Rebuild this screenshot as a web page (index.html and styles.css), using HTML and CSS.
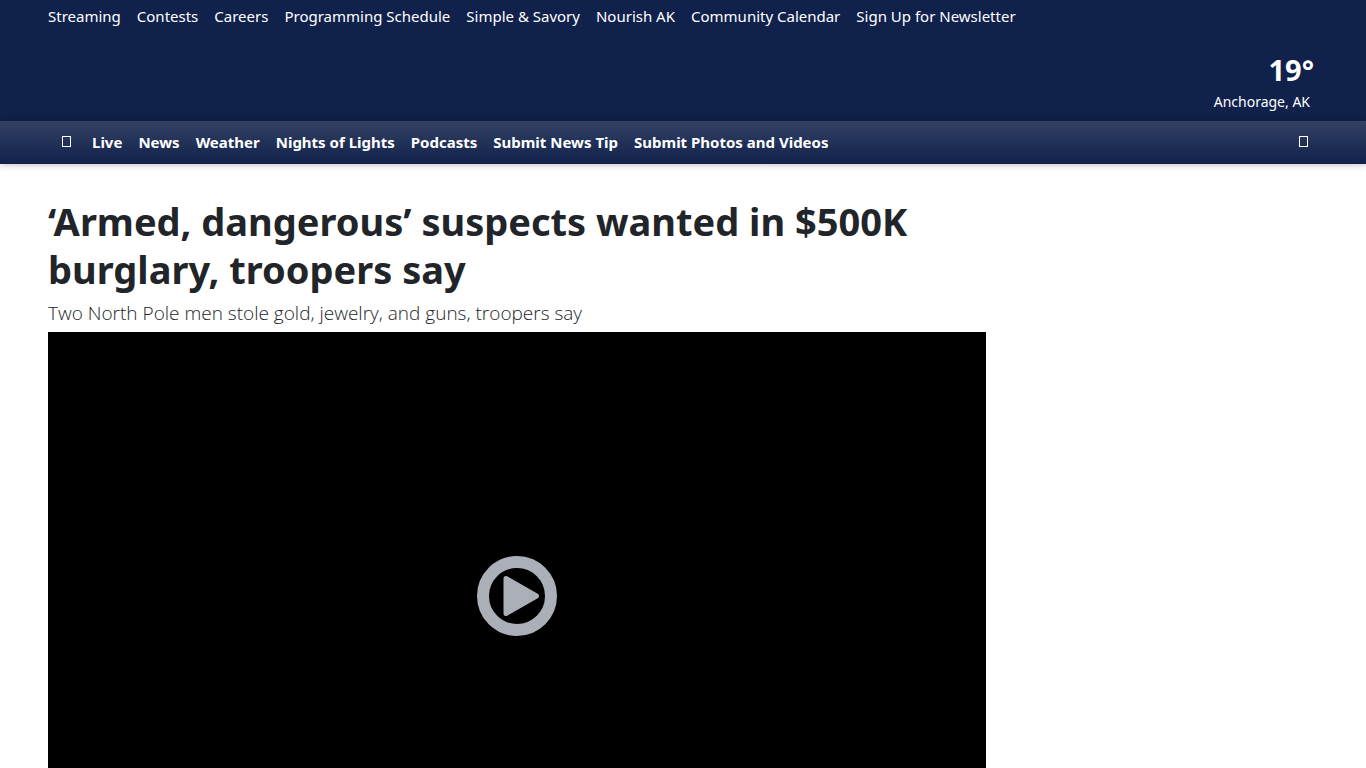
FILE: index.html
```html
<!DOCTYPE html>
<html lang="en">
<head>
    <meta charset="UTF-8">
    <meta name="viewport" content="width=device-width, initial-scale=1.0">
    <title>‘Armed, dangerous’ suspects wanted in $500K burglary, troopers say</title>
    <link rel="stylesheet" href="styles.css">
</head>
<body>
    <header class="site-header">
        <nav class="top-links" aria-label="Quick links">
            <a href="#">Streaming</a>
            <a href="#">Contests</a>
            <a href="#">Careers</a>
            <a href="#">Programming Schedule</a>
            <a href="#">Simple &amp; Savory</a>
            <a href="#">Nourish AK</a>
            <a href="#">Community Calendar</a>
            <a href="#">Sign Up for Newsletter</a>
        </nav>
        <a class="weather" href="#">
            <span class="temperature">19°</span>
            <span class="location">Anchorage, AK</span>
        </a>
    </header>

    <nav class="main-nav" aria-label="Main">
        <button class="icon-button" type="button" aria-label="Menu"><span class="glyph"></span></button>
        <div class="sections">
            <a href="#">Live</a>
            <a href="#">News</a>
            <a href="#">Weather</a>
            <a href="#">Nights of Lights</a>
            <a href="#">Podcasts</a>
            <a href="#">Submit News Tip</a>
            <a href="#">Submit Photos and Videos</a>
        </div>
        <button class="icon-button" type="button" aria-label="Search"><span class="glyph"></span></button>
    </nav>

    <main class="page">
        <article class="story">
            <h1>‘Armed, dangerous’ suspects wanted in $500K burglary, troopers say</h1>
            <p class="subheadline">Two North Pole men stole gold, jewelry, and guns, troopers say</p>
            <div class="video">
                <button class="play" type="button" aria-label="Play video">
                    <svg viewBox="0 0 80 80" width="80" height="80" aria-hidden="true">
                        <circle cx="40" cy="40" r="34" fill="none" stroke="#abafb8" stroke-width="12"/>
                        <path d="M29 22.500v35L59.500 40z" fill="#abafb8" stroke="#abafb8" stroke-width="5" stroke-linejoin="round"/>
                    </svg>
                </button>
            </div>
        </article>
    </main>
</body>
</html>
```
FILE: styles.css
```css
:root {
    --navy: #10214c;
    --text-color: #212529;
    --gutter: 48px;
}

* {
    box-sizing: border-box;
}

body {
    font-family: 'Segoe UI', 'Noto Sans', 'Open Sans', sans-serif;
    font-size: 15px;
    line-height: 24px;
    color: var(--text-color);
    background-color: white;
    margin: 0;
    height: 100vh;
    overflow: hidden;
}

a {
    color: white;
    text-decoration: none;
}

button {
    background: none;
    border: none;
    padding: 0;
    cursor: pointer;
}

.site-header {
    background-color: var(--navy);
    padding: 4px var(--gutter) 8px;
}

.top-links {
    display: flex;
    gap: 16px;
}

.weather {
    display: flex;
    flex-direction: column;
    align-items: flex-end;
    padding-top: 20px;
    padding-right: 4px;
}

.temperature {
    font-size: 29px;
    font-weight: bold;
    line-height: 43px;
}

.location {
    font-size: 14px;
    line-height: 22px;
    padding-right: 4px;
}

.main-nav {
    display: flex;
    align-items: center;
    height: 43px;
    padding: 0 var(--gutter) 2px;
    background: linear-gradient(#334162, var(--navy));
    box-shadow: 0 0 8px rgba(0, 0, 0, 0.3);
}

.icon-button {
    display: flex;
    justify-content: center;
    width: 36px;
}

.icon-button:last-child {
    width: 29px;
}

.glyph {
    width: 9px;
    height: 11px;
    border: 1px solid white;
}

.sections {
    display: flex;
    flex: 1;
    gap: 16px;
    padding-left: 8px;
    font-weight: bold;
}

.page {
    display: grid;
    grid-template-columns: 1fr 300px;
    gap: 32px;
    padding: 33px var(--gutter) 0;
}

h1 {
    margin: 0;
    font-size: 38px;
    font-weight: bold;
    line-height: 48px;
}

.subheadline {
    margin: 5px 0 4px;
    font-family: 'Segoe UI', 'Open Sans', 'Noto Sans', sans-serif;
    font-size: 19px;
    font-weight: 300;
    line-height: 30px;
}

.video {
    display: flex;
    justify-content: center;
    align-items: center;
    aspect-ratio: 16 / 9;
    background-color: black;
}

.play {
    display: flex;
}
```
